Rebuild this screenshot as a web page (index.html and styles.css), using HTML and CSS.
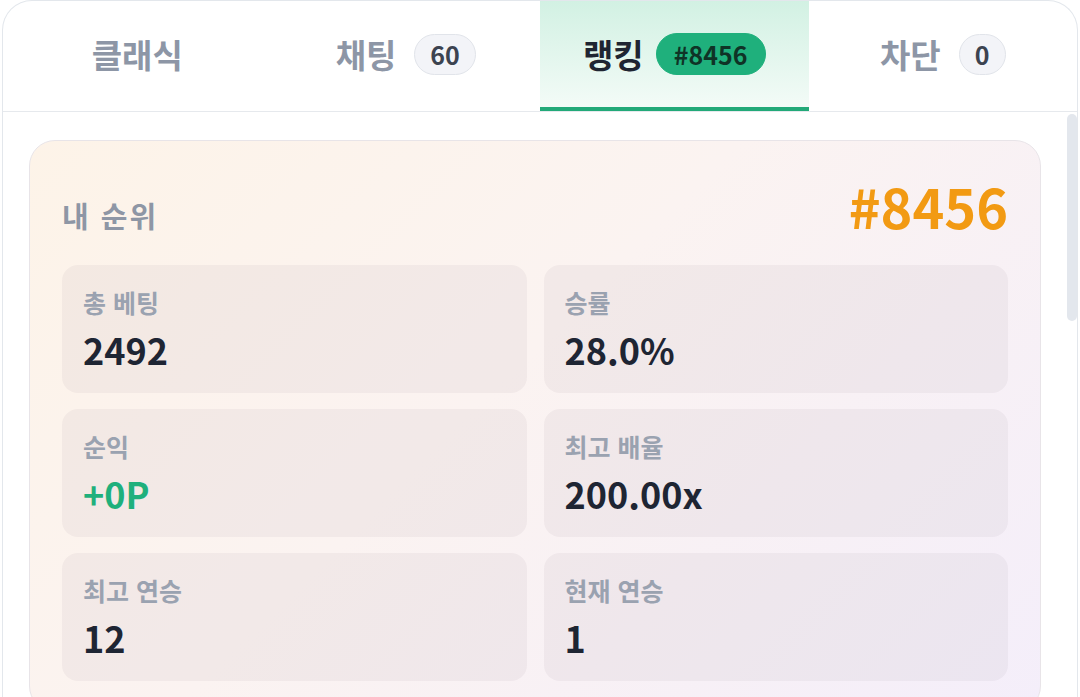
FILE: index.html
```html
<!DOCTYPE html>
<html lang="ko">
  <head>
    <meta charset="UTF-8" />
    <meta name="viewport" content="width=device-width, initial-scale=1.0" />
    <title>랭킹</title>
    <link rel="stylesheet" href="styles.css">
  </head>
  <body>
    <div class="panel">
      <nav class="tabs">
        <div class="tab">클래식</div>
        <div class="tab">채팅 <span class="badge">60</span></div>
        <div class="tab active">랭킹 <span class="badge">#8456</span></div>
        <div class="tab">차단 <span class="badge">0</span></div>
      </nav>

      <div class="content">
        <section class="rank-card">
          <div class="rank-head">
            <span class="rank-title">내 순위</span>
            <span class="rank-num">#8456</span>
          </div>
          <div class="stats">
            <div class="stat">
              <div class="label">총 베팅</div>
              <div class="value">2492</div>
            </div>
            <div class="stat">
              <div class="label">승률</div>
              <div class="value">28.0%</div>
            </div>
            <div class="stat">
              <div class="label">순익</div>
              <div class="value plus">+0P</div>
            </div>
            <div class="stat">
              <div class="label">최고 배율</div>
              <div class="value">200.00x</div>
            </div>
            <div class="stat">
              <div class="label">최고 연승</div>
              <div class="value">12</div>
            </div>
            <div class="stat">
              <div class="label">현재 연승</div>
              <div class="value">1</div>
            </div>
          </div>
        </section>
        <div class="scroll-thumb"></div>
      </div>
    </div>
  </body>
</html>
```

FILE: styles.css
```css
:root {
  --muted: #8d96a6;
  --dark: #1e2533;
  --green: #1fb07c;
  --border: #e3e7ec;
}

* {
  box-sizing: border-box;
}

body {
  margin: 0;
  background: #fff;
  font-family: "Noto Sans CJK KR", "Noto Sans", sans-serif;
  color: var(--dark);
}

.panel {
  margin: 0 2px;
  height: 100vh;
  border: 1.5px solid var(--border);
  border-bottom: none;
  border-radius: 30px 30px 0 0;
  overflow: hidden;
  background: #fff;
}

/* tab bar */
.tabs {
  display: grid;
  grid-template-columns: repeat(4, 1fr);
  height: 111px;
  border-bottom: 1.5px solid #e6e9ed;
}

.tab {
  display: flex;
  align-items: center;
  justify-content: center;
  gap: 18px;
  font-size: 33px;
  font-weight: 700;
  color: var(--muted);
  padding-bottom: 4px;
}

.tab.active {
  color: #1f2532;
  gap: 12px;
  background: linear-gradient(to bottom, #d2f1e3, #f3fbf7);
  border-bottom: 4px solid #22a978;
  padding-bottom: 0;
}

.badge {
  display: inline-flex;
  align-items: center;
  height: 41px;
  padding: 0 15px;
  border-radius: 21px;
  background: #f3f4f8;
  border: 1.5px solid #e1e4ea;
  color: #3c4350;
  font-size: 25px;
  font-weight: 700;
}

.tab.active .badge {
  height: 42px;
  padding: 0 17px;
  background: var(--green);
  border-color: var(--green);
  color: #0f3326;
}

/* content */
.content {
  position: relative;
  padding: 28px 36px 0 26px;
}

.rank-card {
  border: 1.5px solid #e8e4e8;
  border-radius: 26px;
  padding: 32px 32px 30px;
  background: linear-gradient(135deg, #fdf3e8 0%, #fbf3f1 45%, #f4eefa 100%);
}

.rank-head {
  display: flex;
  justify-content: space-between;
  align-items: center;
  height: 70px;
  margin-bottom: 22px;
}

.rank-title {
  font-size: 29px;
  font-weight: 700;
  color: #8e96a5;
  letter-spacing: 2px;
  margin-top: 14px;
}

.rank-num {
  font-size: 54px;
  font-weight: 700;
  color: #f29a13;
  margin-top: -6px;
}

.stats {
  display: grid;
  grid-template-columns: 1fr 1fr;
  column-gap: 17px;
  row-gap: 16px;
}

.stat {
  height: 128px;
  padding: 20px 21px 18px;
  border-radius: 16px;
  background: rgba(120, 105, 125, 0.065);
}

.label {
  font-size: 25px;
  font-weight: 700;
  color: #9aa2b0;
  line-height: 1.4;
  margin-bottom: 6px;
}

.value {
  font-size: 36px;
  font-weight: 700;
  line-height: 1.3;
  color: var(--dark);
}

.value.plus {
  color: var(--green);
}

.scroll-thumb {
  position: absolute;
  top: 2px;
  right: 0;
  width: 10px;
  height: 207px;
  border-radius: 5px;
  background: #e3e7ed;
}
```
